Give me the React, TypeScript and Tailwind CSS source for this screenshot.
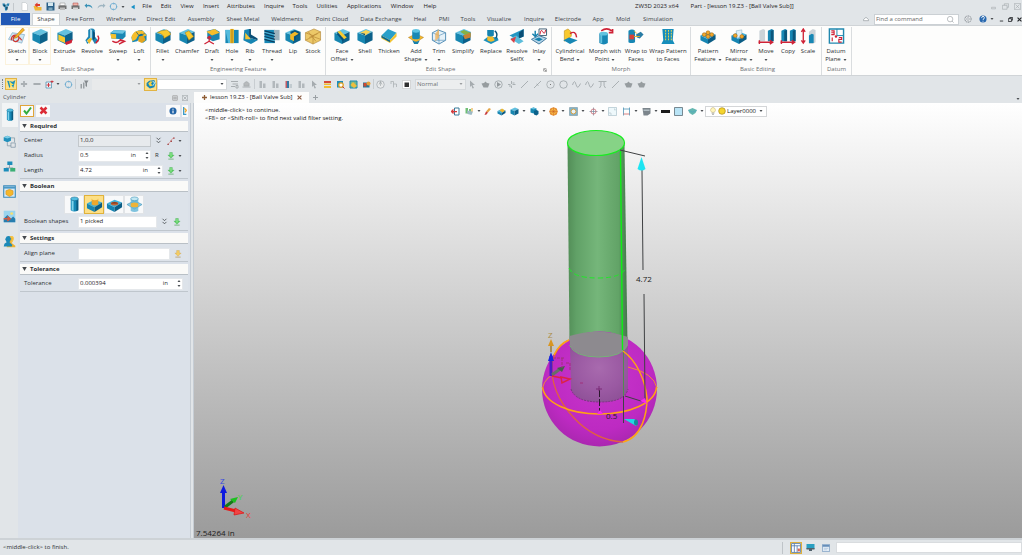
import type { ReactNode } from "react";
import clsx from "clsx";

type IconProps = { name: string; className?: string };

const box = (
  <>
    <path d="M1 5 10 1l7 3-8 4z" fill="#62c0df" />
    <path d="M1 5l8 3v9l-8-4z" fill="#1786b0" />
    <path d="M9 8l8-4v9l-8 4z" fill="#0c618a" />
  </>
);

const slab = (
  <>
    <path d="M1 8l8-4 8 3-8 5z" fill="#3fb2dc" />
    <path d="M1 8v5l8 4v-5z" fill="#1685b2" />
    <path d="M17 7v5l-8 5v-5z" fill="#0b5d85" />
  </>
);

const tube = (
  <>
    <path d="M5 3v12q4 3 8 0V3z" fill="#1788b5" />
    <path d="M6 4v11l2 1V4z" fill="#7fd3ec" />
    <path d="M11 4v12l2-1V3z" fill="#0b5a80" />
    <ellipse cx="9" cy="3" rx="4" ry="2" fill="#52bde0" stroke="#0b5a80" strokeWidth=".5" />
  </>
);

const tray = (
  <>
    <path d="M6 1h6v6h4l-7 7-7-7h4z" fill="#5ad061" stroke="#3aa84a" strokeWidth=".7" />
    <path d="M8 2h2v8H8z" fill="#a5eda2" />
    <path d="M3 16h12" stroke="#6fae78" strokeWidth="2" />
  </>
);

const art: Record<string, ReactNode> = {
  sketch: (
    <>
      <path d="M0 12 4 5l13 2-3 9z" fill="#cfe8f4" stroke="#7aa7c4" strokeWidth=".7" />
      <path d="M3 13c-1-7 9-7 8-2s-7 4-6 0 7-2 9 2" fill="none" stroke="#cf3430" strokeWidth="1.300" />
      <path d="M7 9 15 0l2 2-8 8-3 1z" fill="#f4b52a" stroke="#b67716" strokeWidth=".6" />
    </>
  ),
  block: box,
  extrude: (
    <>
      {box}
      <path d="M2 7l7 3v6l-7-3z" fill="#f8c92e" />
      <path d="M9 15l8-3-1 4-6 2z" fill="#cf2236" />
    </>
  ),
  revolve: (
    <>
      <path d="M5 2q4-3 7 0v7l4 5-4 3-3-5-5 5-2-4 3-4z" fill="#1e86b4" />
      <path d="M7 1l2 1v9l-4 4-2-1 4-4z" fill="#a8d8e8" />
      <path d="M10 3l2 2v6l-2 2z" fill="#0b4f78" />
      <path d="M4 13l4-3 1 2-3 5z" fill="#f4bd27" />
      <path d="M15 8q3 4-2 8" fill="none" stroke="#cf2236" strokeWidth="1.500" />
    </>
  ),
  sweep: (
    <>
      <path d="M1 5 5 2l12 1v6l-3 3-12-1z" fill="#1a88b5" />
      <path d="M1 5 5 2l12 1-3 3z" fill="#6bc5e3" />
      <path d="M1 6l6 .5v5L2 11z" fill="#f6c22d" />
      <path d="M3 14q5 3 8-1l5 1M10 17l6-3-5-2" fill="none" stroke="#cf2236" strokeWidth="1.500" />
    </>
  ),
  loft: (
    <>
      <path d="M1 10Q4 2 12 2l5 5v6l-4 3-3-5-3 3-5 1z" fill="#1988b4" />
      <path d="M1 9Q4 1 13 3l4 5-3 1-2-3Q8 6 6 12l-4 2z" fill="#f6be2b" />
      <path d="M9 9l5-1 2 5-4 3-4-2z" fill="#e2a51e" />
      <path d="M6 4l3 4 6-2" fill="none" stroke="#0b4f72" strokeWidth=".7" />
    </>
  ),
  fillet: (
    <>
      {box}
      <path d="M7 3l6-1q4 2 4 5l-7 4q0-5-7-6z" fill="#f8c92e" stroke="#a77a10" strokeWidth=".5" />
    </>
  ),
  chamfer: (
    <>
      {box}
      <path d="M7 5l4-2 5 6-5 4z" fill="#f8c92e" stroke="#a77a10" strokeWidth=".5" />
    </>
  ),
  draft: (
    <>
      <path d="M4 3 12 1l5 3v8l-7 2-6-3z" fill="#1b84b0" />
      <path d="M3 4 12 1l5 4-8 3z" fill="#f6bd2b" />
      <path d="M6 10v4l-5 3M6 14l5 3M4 11l2-2 2 2" fill="none" stroke="#cf2236" strokeWidth="1.400" />
    </>
  ),
  hole: (
    <>
      <path d="M2 2h14v14H2z" fill="#1787b4" />
      <path d="M2 2h5v14H5z" fill="#53bbdc" />
      <path d="M7 1h4v15H7z" fill="#f5bd28" />
      <path d="M9 1v15" stroke="#a67b12" />
    </>
  ),
  rib: (
    <>
      <path d="M3 2l5-1v9l9 3-7 4-8-4z" fill="#1685b2" />
      <path d="M8 1v9l9 3v-2l-7-4V1z" fill="#0a4f76" />
      <path d="M4 5l6 7H4z" fill="#f8c431" />
    </>
  ),
  thread: (
    <>
      <path d="M1 2h11v14H1z" fill="#1787b4" />
      <path d="M11 2h6v11h-6z" fill="#9db2bd" />
      <path d="M1 3l11 3M1 6l11 3M1 9l11 3M1 12l11 3" stroke="#0b3e60" strokeWidth="1.300" />
      <path d="M1 4.500l11 3M1 10.500l11 3" stroke="#6bc6e2" strokeWidth=".7" />
    </>
  ),
  lip: (
    <>
      {box}
      <path d="M6 4l5-2 5 2v3l-4 2v4l-5-2V7z" fill="#0a5379" />
      <path d="M6 7l5-3 4 2-5 3v5l-4-2z" fill="#f2b827" />
    </>
  ),
  stock: (
    <>
      <path d="M1 5 10 1l7 3v9l-8 4-8-4z" fill="#ecc868" stroke="#b48b3e" strokeWidth=".7" />
      <path d="M1 5l8 3 8-4M9 8v9M5 10l9-4M4 4l8 10M1 13l8-4 8 3" fill="none" stroke="#b78633" strokeWidth=".7" />
    </>
  ),
  face: (
    <>
      {box}
      <path d="M4 4l3-1 7 7-3 2z" fill="#f8c92e" />
      <path d="M4 4v3l6 7 1-2z" fill="#0a4f76" />
    </>
  ),
  shell: (
    <>
      {box}
      <path d="M4 5l6-3 5 2-6 4z" fill="#f8d458" />
      <path d="M4 5l5 1v2z" fill="#0a4f76" />
    </>
  ),
  thicken: (
    <>
      <path d="M1 8 8 1l9 4-7 8z" fill="#2aa0ca" />
      <path d="M1 8l9 5 7-8v4l-7 7-9-5z" fill="#f2c332" />
      <path d="M1 8l9 5v2L1 10z" fill="#0b6691" />
    </>
  ),
  add: (
    <>
      <path d="M1 10l8-4 8 4-8 5z" fill="#f5b82a" stroke="#a8761a" strokeWidth=".5" />
      <path d="M5 3v8q4 2 8 0V3z" fill="#1788b5" />
      <ellipse cx="9" cy="3" rx="4" ry="2" fill="#5cc3e2" />
      <path d="M5 13q4 3 8 0l-2 4H7z" fill="#1580aa" />
    </>
  ),
  trim: (
    <>
      <path d="M2 5l6-3 8 3v8l-7 4-7-4z" fill="#e5f1f8" stroke="#3d7fae" strokeWidth=".9" />
      <path d="M2 5l7 3 7-3M9 8v9M8 2v11l-6 0M8 13l8 0" fill="none" stroke="#5b94bb" strokeWidth=".7" />
      <path d="M9 1v9l-4 4V6z" fill="#f0b35c" opacity=".8" />
    </>
  ),
  simplify: (
    <>
      {box}
      <path d="M6 4l4-2 7 3v4l-5-1z" fill="#86b046" />
      <path d="M9 8l8-3v5l-6 2z" fill="#c98336" />
    </>
  ),
  replace: (
    <>
      <path d="M5 2h7v6q-3 3-7 0z" fill="#1683b0" />
      <path d="M1 13l5-4 10 1 1 3-8 4z" fill="#1b90bd" />
      <path d="M5 9h6l2 4q-4 3-8 0z" fill="#f4bc2c" />
      <path d="M13 3q4 3 1 8" fill="none" stroke="#0b5379" strokeWidth="1.500" />
    </>
  ),
  resolve: (
    <>
      <path d="M1 8 16 1v8L9 12z" fill="#2396c2" />
      <path d="M16 1v8l-5 2V5z" fill="#0a4f76" />
      <path d="M2 11l6-3 8 6-5 3z" fill="#5cbddb" />
      <path d="M2 12l6-3-2 7z" fill="#d84349" />
    </>
  ),
  inlay: (
    <>
      <path d="M9 1h8v7H9z" fill="#fff" stroke="#3c5c72" />
      <path d="M10 7q1-7 3-3t3-2" fill="none" stroke="#cf2236" />
      <path d="M1 12l8-4 8 3-8 6z" fill="#b7d6ea" stroke="#40779b" />
      <path d="M4 12l5-2 4 2-4 2z" fill="#1681ad" />
      <path d="M5 3v5M2 6l3 3 3-3" fill="none" stroke="#1681ad" strokeWidth="1.500" />
    </>
  ),
  bend: (
    <>
      <path d="M3 3l4-2 3 3q2 6-3 7l-4 3z" fill="#f8c92e" stroke="#b98714" strokeWidth=".6" />
      <path d="M2 13l6-3 9 3-8 4z" fill="#1787b4" />
      <path d="M9 6q6-4 7 4" fill="none" stroke="#cf2236" strokeWidth="1.500" />
    </>
  ),
  morph: (
    <>
      <path d="M3 6q5-3 9 0v10q-4 3-9 0z" fill="#1787b4" />
      <path d="M4 7h2v9H4z" fill="#62c3df" />
      <ellipse cx="7.500" cy="6" rx="4.500" ry="2" fill="#62c3df" />
      <path d="M5 3q6-4 11 0M13 5h4V1" fill="none" stroke="#cf2236" strokeWidth="1.800" />
    </>
  ),
  wrap: (
    <>
      <path d="M1 3q4-3 7 0v12q-4 2-7 0z" fill="#1787b4" />
      <path d="M2 7h5v5H2z" fill="#d64038" />
      <path d="M9 7l5-3 3 3-4 4-3-1z" fill="#287ca5" />
      <path d="M7 9h6M7 3l3 3" stroke="#e4b02b" />
    </>
  ),
  wrapPattern: (
    <>
      <path d="M3 1h12l-1 12 2 4H2l2-4z" fill="#178ebb" />
      {[3, 6, 9, 12].map((y) => (
        <path key={y} d={`M6 ${y}h1M9 ${y}h1M12 ${y}h1`} stroke="#f8d947" strokeWidth="2" />
      ))}
    </>
  ),
  pattern: (
    <>
      {slab}
      {["5,7", "9,5", "13,7", "9,9"].map((p) => (
        <circle key={p} cx={p.split(",")[0]} cy={p.split(",")[1]} r="2" fill="#f5a829" stroke="#9d6313" strokeWidth=".6" />
      ))}
    </>
  ),
  mirror: (
    <>
      {slab}
      <path d="M6 3l6-1v7l-5 2z" fill="#dff0f7" stroke="#7aa2ba" strokeWidth=".5" />
      <circle cx="5" cy="8" r="2" fill="#f5a829" stroke="#9d6313" strokeWidth=".6" />
      <circle cx="12" cy="9" r="2" fill="#f5a829" stroke="#9d6313" strokeWidth=".6" />
    </>
  ),
  move: (
    <>
      <path d="M2 3l4-2 2 1v12H2z" fill="#cbd3d8" />
      <path d="M11 3l4-2 2 1v12h-6z" fill="#1787b4" />
      <path d="M14 3l3-1v12h-3z" fill="#0b577d" />
      <path d="M1 15h15M13 13l3 2-3 2M2 13v4" fill="none" stroke="#cf2236" strokeWidth="1.500" />
    </>
  ),
  copy: (
    <>
      <path d="M2 3l4-2 2 1v12H2zM11 3l4-2 2 1v12h-6z" fill="#1787b4" />
      <path d="M5 3l3-1v12H5zM14 3l3-1v12h-3z" fill="#0b577d" />
      <path d="M1 15h15M13 13l3 2-3 2M2 13v4" fill="none" stroke="#cf2236" strokeWidth="1.500" />
    </>
  ),
  scale: (
    <>
      <path d="M10 4l4-3 3 1v13l-3 2h-4z" fill="#cbd3d8" />
      <path d="M10 8l3-2 2 1v9h-5z" fill="#1787b4" />
      <path d="M4 1v15M2 4l2-3 2 3M2 13l2 3 2-3" fill="none" stroke="#cf2236" strokeWidth="1.400" />
    </>
  ),
  datum: (
    <>
      <path d="M2 1h15v15H2z" fill="#fff" stroke="#2188ae" strokeWidth="1.500" />
      <path d="M10 1v7h7" fill="none" stroke="#2188ae" />
      <path d="M4 3h3v4H4M4 5h3M5 10v4M12 10h3v2h-3v3h3" fill="none" stroke="#cf2236" strokeWidth="1.200" />
      <circle cx="9" cy="9" r="1.300" fill="#cf2236" />
    </>
  ),
  cylinder: tube,
  boolAdd: (
    <>
      {slab}
      <path d="M6 3v6q3 2 7 0V3z" fill="#eda72b" />
      <ellipse cx="9.500" cy="3" rx="3.500" ry="1.500" fill="#fbe083" />
    </>
  ),
  boolCut: (
    <>
      {slab}
      <ellipse cx="9" cy="8" rx="4" ry="2" fill="#c96332" />
      <path d="M5 8q4-3 8 0" fill="#713320" />
    </>
  ),
  boolCross: (
    <>
      <path d="M1 9l8-4 8 4-8 5z" fill="#8acbe6" stroke="#3990b7" strokeWidth=".6" />
      <path d="M5 3v13q4 2 8 0V3z" fill="#61b5d7" opacity=".8" />
      <ellipse cx="9" cy="3" rx="4" ry="2" fill="#c1e7f2" stroke="#3990b7" strokeWidth=".6" />
      <path d="M5 8v3q4 2 8 0V8q-4-2-8 0z" fill="#eeb338" />
    </>
  ),
  logo: (
    <>
      <path d="M1 1h5l3 4 3-4h5l-2 6-3 1-1 9H7L6 9 2 7z" fill="#237eab" />
      <path d="M4 4h4v4H4zM10 9h3l-1 7-2-2z" fill="#123f57" />
      <path d="M6 3l5 4M13 4l-5 5" stroke="#d9f3fb" />
    </>
  ),
  page: <path d="M4 1h7l4 4v12H4z" fill="#fff" stroke="#b5babe" />,
  open: (
    <>
      <path d="M1 8h6l2 2h8v7H4z" fill="#f0b637" />
      <path d="M3 6 9 1v3h5v4H9v3z" fill="#dc3b2c" />
    </>
  ),
  save: (
    <>
      <path d="M1 1h16v16H1z" fill="#2b6088" />
      <path d="M4 1h10v7H4z" fill="#d5e8ef" />
      <path d="M5 11h8v6H5z" fill="#7da7bd" />
    </>
  ),
  print: (
    <>
      <path d="M4 2h10v5H4z" fill="#f9f9f9" stroke="#888" />
      <path d="M1 7h16v7H1z" fill="#707070" />
      <path d="M4 11h10v5H4z" fill="#bdbdbd" />
    </>
  ),
  printRed: (
    <>
      <path d="M4 2h10v5H4z" fill="#f1b3a6" stroke="#a44" />
      <path d="M1 7h16v7H1z" fill="#707070" />
      <path d="M4 11h10v5H4z" fill="#d7d7d7" />
    </>
  ),
  undo: <path d="M1 7l5-4v3q9-2 11 7-5-6-11-4v3z" fill="#3991b6" />,
  redo: <path d="M17 7l-5-4v3Q3 4 1 13q5-6 11-4v3z" fill="#9fb5c1" />,
  ring: (
    <>
      <circle cx="9" cy="9" r="6.500" fill="none" stroke="#6dacd0" strokeWidth="1.600" />
      <path d="M9 1l3 3-4 1M9 17l-3-3 4-1M1 8l3-2v5M17 10l-3 2V7" fill="#6dacd0" />
    </>
  ),
  left: <path d="M14 2v14L3 9z" fill="#148fc5" />,
  pick: (
    <>
      <path d="M2 3l4 13 4-5 3 5 4-14-5 3z" fill="#1c91bb" />
      <path d="M5 3l9 8-4 0-2 5-1-5z" fill="#f6e35a" />
    </>
  ),
  plus: <path d="M9 2v14M2 9h14" stroke="#a9afb3" strokeWidth="4" />,
  minus: <path d="M1 9h16" stroke="#a0a6aa" strokeWidth="4" />,
  addBox: (
    <>
      <path d="M2 4h11v12H2z" fill="#edf5fa" stroke="#4f8fad" strokeWidth="1.500" />
      <path d="M7 6v8M3 10h8M14 1v5M11 3h6" stroke="#cc3842" strokeWidth="2" />
    </>
  ),
  filter: (
    <>
      <path d="M1 8h3v9H1zM6 5h3v12H6z" fill="#9aa0a4" />
      <path d="M8 1h9l-3 5v8l-3-2V6z" fill="#83898d" />
    </>
  ),
  layers: (
    <>
      <path d="M1 7l5-4 9-1 2 6-2 7-8 2-6-5z" fill="#1787b4" />
      <path d="M4 8l4-4 4 1-3 3 3 4-5 1z" fill="#f5d03f" />
      <path d="M12 4l4 3-4 5" fill="none" stroke="#a3dbec" strokeWidth="2" />
    </>
  ),
  align: <path d="M2 3h14M5 8h11M2 13h8M12 11h4v5h-4z" fill="none" stroke="#a9aeb1" strokeWidth="2" />,
  bellGray: <path d="M4 12V7q5-7 10 0v5zM1 14h16" fill="#b7babc" stroke="#a9aeb1" strokeWidth="2" />,
  barGray: <path d="M3 2h5v14H3zM10 7h5v9h-5z" fill="#b2b8bc" />,
  barRed: (
    <>
      <path d="M3 2h6v14H3z" fill="#c25b65" />
      <path d="M6 2h4v14H6z" fill="#317ba5" />
      <path d="M11 8h5v8h-5z" fill="#c2cbd0" />
    </>
  ),
  arrowGray: <path d="M4 1l10 9H9l3 6-3 1-2-6-3 3z" fill="#a5abaf" />,
  tableYellow: (
    <>
      <path d="M2 2h14v4H2z" fill="#d4493a" />
      <path d="M2 7h14v3H2zM2 12h14v4H2z" fill="#f2bd31" />
    </>
  ),
  find: (
    <>
      <path d="M2 2h12v13H2z" fill="#1c8db9" />
      <circle cx="10" cy="10" r="4.500" fill="#fff" stroke="#e0a325" strokeWidth="2.500" />
      <path d="M13 13l4 4" stroke="#ca3438" strokeWidth="2" />
    </>
  ),
  mapTile: (
    <>
      <path d="M2 2h14v14H2z" fill="#75b98f" stroke="#1b88b1" strokeWidth="2" />
      <path d="M3 10l5-6 8 8-6 4z" fill="#f0be3e" />
    </>
  ),
  redTile: (
    <>
      <path d="M2 5h13v10H2z" fill="#20769c" />
      <path d="M3 6h6v7H3z" fill="#cf4a32" />
      <circle cx="13" cy="7" r="4" fill="#e7a13c" />
    </>
  ),
  clock: (
    <>
      <circle cx="9" cy="9" r="7.500" fill="#e9ebec" stroke="#9ba1a5" strokeWidth="1.300" />
      <path d="M9 3v9M6 9l3-6 3 6" fill="none" stroke="#8d9498" />
    </>
  ),
  corner: <path d="M3 3h6v12M9 8h6v6M2 6h4" fill="none" stroke="#a8aeb2" strokeWidth="1.500" />,
  blackBox: (
    <>
      <path d="M1 1h16v16H1z" fill="#fff" stroke="#bbb" />
      <path d="M5 5h9v9H5z" fill="#303030" />
    </>
  ),
  play: (
    <>
      <circle cx="9" cy="9" r="7.500" fill="none" stroke="#979da1" strokeWidth="1.500" />
      <path d="M6 4l8 5-8 5z" fill="#93999d" />
    </>
  ),
  target: (
    <>
      <circle cx="9" cy="9" r="7.500" fill="none" stroke="#979da1" strokeWidth="1.300" />
      <path d="M8 8h2v2H8z" fill="#777" />
    </>
  ),
  circle: <circle cx="9" cy="9" r="7.500" fill="none" stroke="#979da1" strokeWidth="1.500" />,
  line: <path d="M2 16 16 2" stroke="#979da1" strokeWidth="1.500" />,
  linePoint: <path d="M2 16 16 2M7 8l4 3" stroke="#979da1" strokeWidth="1.500" />,
  cross: <path d="M9 2v6M9 11v5M2 9h5M11 9h6M4 12h4M11 6h4" stroke="#979da1" strokeWidth="1.500" />,
  wave: <path d="M1 10Q5-3 8 9t9-2" fill="none" stroke="#979da1" strokeWidth="1.500" />,
  arch: <path d="M3 16q4-3 3-12M15 16q-4-3-3-12M1 3h16" fill="none" stroke="#979da1" strokeWidth="1.500" />,
  pot: <path d="M1 7l5-1 3-3 3 3 5 1-3 8H5z" fill="#969c9f" />,
  tree: (
    <>
      <path d="M1 3l5-2 5 2v5l-5 2-5-2z" fill="#2190bb" />
      <path d="M1 3l5-2 5 2-5 2z" fill="#7dcde6" />
      <path d="M6 10v5h5M11 4h5v6M11 11h6v6h-6z" fill="none" stroke="#7d94a3" />
    </>
  ),
  nodes: (
    <>
      <path d="M9 6v5M4 11h10" stroke="#738997" />
      <path d="M6 2h7v5H6zM1 11h7v5H1z" fill="#1c8dba" />
      <path d="M10 11h7v5h-7z" fill="#3baf75" />
    </>
  ),
  sheet: (
    <>
      <path d="M1 1h16v16H1z" fill="#d7ebf6" stroke="#3a89b9" strokeWidth="1.500" />
      <path d="M1 2h16v3H1z" fill="#4a98c6" />
      <path d="M4 8l5-2 5 2v5l-5 3-5-3z" fill="#f5b72a" stroke="#bf7d19" strokeWidth=".6" />
    </>
  ),
  image: (
    <>
      <path d="M1 1h16v16H1z" fill="#9bd4ee" />
      <path d="M1 12l5-5 5 5 3-3 3 3v5H1z" fill="#277dae" />
      <circle cx="12" cy="5" r="2" fill="#f3dd75" />
      <path d="M1 12h8M6 9l4 3-4 3" fill="none" stroke="#d45c43" strokeWidth="2" />
    </>
  ),
  people: (
    <>
      <path d="M9 2q6-2 5 4l-2 5 5 4v2H5z" fill="#eeb22f" />
      <path d="M5 2q6-2 6 4l-2 4 4 4-1 2H1l1-4 3-2-2-4z" fill="#1b89b8" />
      <path d="M10 3q5-2 4 3l-2 4" fill="none" stroke="#f6c54a" strokeWidth="2" />
    </>
  ),
  check: <path d="M2 9l5 6L16 3" fill="none" stroke="#31ad3e" strokeWidth="4" />,
  cancel: <path d="M3 3l12 12M15 3L3 15" stroke="#dc2c36" strokeWidth="5" />,
  info: (
    <>
      <circle cx="9" cy="9" r="8" fill="#2465a7" />
      <path d="M9 8v6M9 4v2" stroke="#fff" strokeWidth="2.500" />
    </>
  ),
  redLine: (
    <>
      <path d="M2 16Q8 12 9 8t7-6" fill="none" stroke="#e08686" strokeWidth="1.500" />
      <path d="M1 15h3v3H1zM8 8h3v3H8zM14 1h3v3h-3z" fill="#9c3a3a" />
    </>
  ),
  tray,
  trayYellow: (
    <>
      <path d="M6 1h6v6h4l-7 7-7-7h4z" fill="#f4cd64" stroke="#c49738" strokeWidth=".7" />
      <path d="M3 16h12" stroke="#b9a47a" strokeWidth="2" />
    </>
  ),
  exit: (
    <>
      <path d="M7 2h9v14H7z" fill="#fff" stroke="#397a9a" strokeWidth="2" />
      <path d="M12 9H1M5 5L1 9l4 4" fill="none" stroke="#d33b3d" strokeWidth="2.500" />
    </>
  ),
  green: (
    <>
      <path d="M1 2h5v11H1zM8 4h4v10H8z" fill="#70bf76" />
      <path d="M4 7l12 2-3 7-8-2z" fill="#9db9c5" />
      <path d="M14 2v7" stroke="#e8a22b" strokeWidth="2" />
    </>
  ),
  brush: (
    <>
      <path d="M12 2l4 2-6 7-4-2z" fill="#e3a548" />
      <path d="M6 9l4 2-3 4-4 1z" fill="#c83d40" />
    </>
  ),
  goldBox: (
    <>
      {slab}
      <path d="M5 7l5-4 6 4-5 4z" fill="#f1b52f" />
    </>
  ),
  blocks: (
    <>
      <path d="M1 3l6-2 6 2v8l-6 2-6-2z" fill="#1786b0" />
      <path d="M1 3l6-2 6 2-6 2z" fill="#62c0df" />
      <path d="M8 8l5-2 4 2v6l-4 3-5-2z" fill="#0c618a" />
    </>
  ),
  wheel: (
    <>
      <circle cx="9" cy="9" r="7.500" fill="#f7b846" stroke="#df7a22" strokeWidth="1.500" />
      <path d="M9 1v16M1 9h16M3 4l12 10M15 4L3 14" stroke="#c96322" />
    </>
  ),
  zoomAll: (
    <>
      <path d="M1 1h16v16H1z" fill="#7eb4cf" stroke="#718a94" />
      <circle cx="9" cy="9" r="5" fill="#e7f1f5" stroke="#d69c3a" strokeWidth="2" />
    </>
  ),
  pan: (
    <>
      <path d="M9 1v16M1 9h16" stroke="#7c8fa0" strokeWidth="1.500" />
      <circle cx="9" cy="9" r="5" fill="none" stroke="#c8606a" strokeWidth="1.500" />
    </>
  ),
  frame: <path d="M1 1h16v16H1zM4 10v4h4M12 4h2v3" fill="#eef8fb" stroke="#a1bac5" strokeWidth="1.200" />,
  section: (
    <>
      <path d="M3 1v16M15 1v16M3 4h12" fill="none" stroke="#438eb1" strokeWidth="1.500" />
      <path d="M3 14h12" stroke="#d05858" strokeWidth="1.500" />
    </>
  ),
  shade: (
    <>
      <path d="M1 2h16v11l-6 4H3z" fill="#7c858c" />
      <path d="M3 5h12v3H3z" fill="#b3bec4" />
    </>
  ),
  thick: <path d="M0 6h18v6H0z" fill="#1b1b1b" />,
  swatch: <path d="M1 1h16v16H1z" fill="#b9e4f6" stroke="#55666f" strokeWidth="1.500" />,
  disk: (
    <>
      <path d="M0 6l9-4 9 4-3 6-6 4-6-4z" fill="#65b7b1" />
      <path d="M1 7l8 3 8-3" fill="none" stroke="#4aa5c4" />
    </>
  ),
  bulb: (
    <>
      <path d="M6 12Q1 7 5 3q4-4 8 0t-1 9z" fill="#fff6bd" stroke="#b7a264" />
      <path d="M6 14h6M7 17h4" stroke="#8a8a82" strokeWidth="1.500" />
    </>
  ),
  sun: <circle cx="9" cy="9" r="7.500" fill="#f4d42e" stroke="#a98818" strokeWidth="1.500" />,
  grid: (
    <>
      <path d="M1 1h16v16H1z" fill="#fff" stroke="#527bb0" strokeWidth="1.500" />
      <path d="M1 5h16M6 1v16M11 5v12" stroke="#527bb0" strokeWidth="1.500" />
      <path d="M12 10h4v5h-4z" fill="#db6451" />
    </>
  ),
  monitor: (
    <>
      <path d="M1 2h16v10H1z" fill="#2a9fc1" />
      <path d="M1 10h16v3H1zM6 13h6v3H6z" fill="#51616b" />
    </>
  ),
  windowIcon: (
    <>
      <path d="M1 1h16v16H1z" fill="#e3edf6" stroke="#5e88b5" strokeWidth="1.300" />
      <path d="M1 2h16v4H1zM4 10h10M4 13h7" fill="#5e88b5" stroke="#91afd0" />
    </>
  ),
  gear: (
    <>
      <circle cx="9" cy="9" r="7" fill="#eceef0" stroke="#999fa4" strokeWidth="2.500" strokeDasharray="3 1" />
      <circle cx="9" cy="9" r="3" fill="none" stroke="#999fa4" strokeWidth="1.500" />
    </>
  ),
  help: (
    <>
      <circle cx="9" cy="9" r="8" fill="#2868af" />
      <path d="M6 7q0-4 3-4t3 3-3 4v1M9 13v2" fill="none" stroke="#fff" strokeWidth="2" />
    </>
  ),
  min: <path d="M3 13h12v3H3z" fill="currentColor" />,
  minLight: <path d="M4 11h10v4H4z" fill="none" stroke="currentColor" strokeWidth="1.500" />,
  restore: <path d="M6 6V2h11v9h-4M1 6h12v10H1z" fill="none" stroke="currentColor" strokeWidth="1.600" />,
  restoreBold: <path d="M6 6V2h11v9h-4M1 6h12v10H1z" fill="none" stroke="currentColor" strokeWidth="3" />,
  close: <path d="M2 2l14 14M16 2L2 16" stroke="currentColor" strokeWidth="4" />,
  closeBox: <path d="M1 1h16v16H1zM4 4l10 10M14 4L4 14" fill="none" stroke="currentColor" strokeWidth="1.500" />,
  chevrons: <path d="M4 2l5 5 5-5M4 10l5 5 5-5" fill="none" stroke="#3f4448" strokeWidth="2" />,
  search: <path d="M13 13l4 4M8 1a7 7 0 100 14A7 7 0 008 1" fill="none" stroke="#8f9599" strokeWidth="1.500" />,
  up: <path d="M1 11l8-7 8 7v3H1z" fill="#fff" stroke="#8e959a" strokeWidth="2" />,
};

const Icon = ({ name, className = "size-2.5" }: IconProps) => (
  <svg viewBox="0 0 18 18" className={clsx("block shrink-0", className)} aria-hidden="true">
    {art[name]}
  </svg>
);

const Caret = ({ className = "" }: { className?: string }) => (
  <svg viewBox="0 0 8 4" className={clsx("block h-0.5 w-1 shrink-0", className)} aria-hidden="true">
    <path d="M1 0h6L4 4z" fill="#4a4f53" />
  </svg>
);

const quickIcons = [
  { name: "page", label: "New", w: "w-3.5" },
  { name: "open", label: "Open", w: "w-[13px]" },
  { name: "save", label: "Save", w: "w-3" },
  { name: "print", label: "Print", w: "w-[13px]" },
  { name: "printRed", label: "Plot", w: "w-3" },
  { name: "undo", label: "Undo", w: "w-3.5" },
  { name: "redo", label: "Redo", w: "w-3" },
  { name: "ring", label: "Regenerate", w: "w-3" },
];

const menus = [
  ["File", "w-5"],
  ["Edit", "w-[18px]"],
  ["View", "w-6"],
  ["Insert", "w-6"],
  ["Attributes", "w-9"],
  ["Inquire", "w-[30px]"],
  ["Tools", "w-[22px]"],
  ["Utilities", "w-8"],
  ["Applications", "w-[42px]"],
  ["Window", "w-[34px]"],
  ["Help", "w-[22px]"],
];

const tabs = [
  ["Free Form", "w-10"],
  ["Wireframe", "w-[42px]"],
  ["Direct Edit", "w-[38px]"],
  ["Assembly", "w-[42px]"],
  ["Sheet Metal", "w-[42px]"],
  ["Weldments", "w-[46px]"],
  ["Point Cloud", "w-11"],
  ["Data Exchange", "w-[54px]"],
  ["Heal", "w-6"],
  ["PMI", "w-6"],
  ["Tools", "w-6"],
  ["Visualize", "w-[38px]"],
  ["Inquire", "w-8"],
  ["Electrode", "w-9"],
  ["App", "w-6"],
  ["Mold", "w-[26px]"],
  ["Simulation", "w-11"],
];

type Tool = { icon: string; w: string; lines: string[]; drop?: boolean; hot?: boolean };
type Group = { title: string; w: string; tools: Tool[]; launcher?: boolean };

const groups: Group[] = [
  {
    title: "Basic Shape",
    w: "w-[151px] pl-[5px]",
    tools: [
      { icon: "sketch", w: "w-6", lines: ["Sketch"], drop: true, hot: true },
      { icon: "block", w: "w-[22px]", lines: ["Block"], drop: true, hot: true },
      { icon: "extrude", w: "w-[27px]", lines: ["Extrude"] },
      { icon: "revolve", w: "w-7", lines: ["Revolve"] },
      { icon: "sweep", w: "w-6", lines: ["Sweep"], drop: true },
      { icon: "loft", w: "w-[18px]", lines: ["Loft"], drop: true },
    ],
  },
  {
    title: "Engineering Feature",
    w: "w-[175px]",
    tools: [
      { icon: "fillet", w: "w-[23px]", lines: ["Fillet"], drop: true },
      { icon: "chamfer", w: "w-[26px]", lines: ["Chamfer"] },
      { icon: "draft", w: "w-6", lines: ["Draft"], drop: true },
      { icon: "hole", w: "w-4", lines: ["Hole"], drop: true },
      { icon: "rib", w: "w-5", lines: ["Rib"], drop: true },
      { icon: "thread", w: "w-6", lines: ["Thread"], drop: true },
      { icon: "lip", w: "w-[18px]", lines: ["Lip"] },
      { icon: "stock", w: "w-[22px]", lines: ["Stock"] },
    ],
  },
  {
    title: "Edit Shape",
    w: "w-[226px] pl-1",
    launcher: true,
    tools: [
      { icon: "face", w: "w-6", lines: ["Face", "Offset"], drop: true },
      { icon: "shell", w: "w-[22px]", lines: ["Shell"] },
      { icon: "thicken", w: "w-[26px]", lines: ["Thicken"] },
      { icon: "add", w: "w-7", lines: ["Add", "Shape"], drop: true },
      { icon: "trim", w: "w-[18px]", lines: ["Trim"], drop: true },
      { icon: "simplify", w: "w-[30px]", lines: ["Simplify"] },
      { icon: "replace", w: "w-[26px]", lines: ["Replace"] },
      { icon: "resolve", w: "w-[26px]", lines: ["Resolve", "SelfX"] },
      { icon: "inlay", w: "w-[18px]", lines: ["Inlay"], drop: true },
    ],
  },
  {
    title: "Morph",
    w: "w-[139px]",
    tools: [
      { icon: "bend", w: "w-9", lines: ["Cylindrical", "Bend"], drop: true },
      { icon: "morph", w: "w-[34px]", lines: ["Morph with", "Point"], drop: true },
      { icon: "wrap", w: "w-7", lines: ["Wrap to", "Faces"] },
      { icon: "wrapPattern", w: "w-9", lines: ["Wrap Pattern", "to Faces"] },
    ],
  },
  {
    title: "Basic Editing",
    w: "w-[131px] pl-[3px]",
    tools: [
      { icon: "pattern", w: "w-7", lines: ["Pattern", "Feature"], drop: true },
      { icon: "mirror", w: "w-[34px]", lines: ["Mirror", "Feature"], drop: true },
      { icon: "move", w: "w-5", lines: ["Move"], drop: true },
      { icon: "copy", w: "w-6", lines: ["Copy"] },
      { icon: "scale", w: "w-4", lines: ["Scale"] },
    ],
  },
  {
    title: "Datum",
    w: "w-[30px]",
    tools: [{ icon: "datum", w: "w-7", lines: ["Datum", "Plane"], drop: true }],
  },
];

const selectTools = [
  "barGray", "barGray", "barRed", "barGray", "arrowGray", "tableYellow", "find", "mapTile", "redTile",
];

const pointTools = [
  "arrowGray", "pot", "play", "cross", "line", "linePoint", "target", "circle", "wave", "wave", "arch", "line", "pot", "pot",
];

const viewTools = [
  { name: "exit", w: "w-3.5" },
  { name: "green", w: "w-[18px]", drop: true },
  { name: "brush", w: "w-3.5" },
  { name: "goldBox", w: "w-[13px]" },
  { name: "block", w: "w-5", drop: true },
  { name: "blocks", w: "w-[19px]", drop: true },
  { name: "wheel", w: "w-5", drop: true },
  { name: "zoomAll", w: "w-5", drop: true },
  { name: "pan", w: "w-[19px]", drop: true },
  { name: "frame", w: "w-3.5" },
  { name: "section", w: "w-5", drop: true },
  { name: "shade", w: "w-[19px]", drop: true },
  { name: "thick", w: "w-[13px]" },
  { name: "swatch", w: "w-3.5" },
  { name: "disk", w: "w-[18px]", drop: true },
];

const TitleBar = () => (
  <header className="flex h-[13px] items-center text-[#1d2023]">
    <Icon name="logo" className="ml-0.5 size-2" />
    <span className="mr-[3px] ml-[3px] h-2 w-px bg-[#c3c8cc]" />
    {quickIcons.map((q) => (
      <button key={q.name} aria-label={q.label} className={clsx("flex justify-center", q.w)}>
        <Icon name={q.name} className="size-[9px]" />
      </button>
    ))}
    <Caret className="mx-0.5" />
    <button aria-label="Collapse menu" className="mr-px ml-[3px]">
      <Icon name="left" className="size-1.5" />
    </button>
    <nav className="flex">
      {menus.map(([label, w]) => (
        <button key={label} className={clsx("flex justify-center whitespace-nowrap", w)}>
          {label}
        </button>
      ))}
    </nav>
    <span className="ml-[194px] whitespace-nowrap">ZW3D 2023 x64</span>
    <span className="ml-3 whitespace-nowrap">Part - [lesson 19.Z3 - [Ball Valve Sub]]</span>
    <div className="mr-px ml-auto flex gap-[5px] text-[#a3a9ad]">
      <button aria-label="Minimize"><Icon name="minLight" className="size-[7px]" /></button>
      <button aria-label="Restore"><Icon name="restore" className="size-[7px]" /></button>
      <button aria-label="Close"><Icon name="closeBox" className="size-[7px]" /></button>
    </div>
  </header>
);

const TabBar = () => (
  <div className="flex h-3 items-stretch text-[#404448]">
    <button className="mr-0.5 ml-px w-[29px] bg-[#2158b5] text-white">File</button>
    <button className="w-7 border border-b-0 border-[#cfd4d7] bg-[#fdfdfc]">Shape</button>
    {tabs.map(([label, w]) => (
      <button key={label} className={clsx("flex items-center justify-center whitespace-nowrap", w)}>
        {label}
      </button>
    ))}
    <div className="ml-auto flex items-center">
      <Icon name="up" className="mr-[5px] size-1.5" />
      <label className="flex h-[11px] w-[85px] items-center border border-[#cbd0d4] bg-white pr-1">
        <input aria-label="Find a command" placeholder="Find a command" className="w-full min-w-0 pl-px placeholder:text-[#666]" />
        <Icon name="search" className="size-[7px]" />
      </label>
      <button aria-label="Options" className="ml-[5px]"><Icon name="gear" className="size-2" /></button>
      <button aria-label="Help" className="ml-[7px] flex items-center gap-[3px]">
        <Icon name="help" className="size-2" />
        <Caret />
      </button>
      <div className="ml-[5px] flex items-center gap-1 text-[#202326]">
        <Icon name="min" className="size-[5px]" />
        <Icon name="restoreBold" className="size-[5px]" />
        <Icon name="close" className="size-[5px]" />
      </div>
    </div>
  </div>
);

const ToolButton = ({ icon, w, lines, drop, hot }: Tool) => (
  <button
    className={clsx(
      "flex h-[38px] shrink-0 flex-col items-center border text-center leading-[8px] whitespace-nowrap",
      hot ? "border-[#fbf2dc]" : "border-transparent",
      w,
    )}
  >
    <Icon name={icon} className="mb-0.5 h-[17px] w-[18px]" />
    <span>{lines[0]}</span>
    <span className="flex h-2 items-center gap-0.5">
      {lines[1]}
      {drop && <Caret className="mt-0.5" />}
    </span>
  </button>
);

const Ribbon = () => (
  <div className="flex h-[51px] border-y border-[#d0d4d7] bg-[#fdfdfc] text-[#2c3033]">
    {groups.map((g) => (
      <section key={g.title} className={clsx("flex shrink-0 flex-col pt-px", g.w)}>
        <div className="relative flex flex-1 flex-col border-r border-[#dadddf]">
          <div className="flex">
            {g.tools.map((t) => (
              <ToolButton key={t.lines.join(" ")} {...t} />
            ))}
          </div>
          <h2 className="text-center leading-[9px] text-[#6a6e72]">{g.title}</h2>
          {g.launcher && (
            <button aria-label="Edit Shape options" className="absolute right-1 bottom-[3px]">
              <svg viewBox="0 0 6 6" className="size-1">
                <path d="M1 5V1h4M2 2l3 3M5 2v3H2" fill="none" stroke="#777" />
              </svg>
            </button>
          )}
        </div>
      </section>
    ))}
  </div>
);

const ToolStrip = () => (
  <div className="flex h-4 items-center">
    <span className="mr-0.5 ml-0.5 h-2.5 border-l border-dotted border-[#7d8286]" />
    <button aria-label="Pick" className="grid size-3 place-items-center border border-[#e2b443] bg-[#fde08a]">
      <Icon name="pick" className="size-2.5" />
    </button>
    <button aria-label="Add" className="ml-[3px]"><Icon name="plus" className="size-2" /></button>
    <button aria-label="Remove" className="ml-[5px]"><Icon name="minus" className="size-2" /></button>
    <button aria-label="Add chain" className="ml-1 flex items-center gap-0.5">
      <Icon name="addBox" className="size-[9px]" />
      <Caret />
    </button>
    <button aria-label="Polygon" className="ml-1"><Icon name="ring" className="size-[9px]" /></button>
    <span className="ml-0.5 h-2.5 w-px bg-[#c8cdd1]" />
    <button aria-label="Filter" className="ml-1"><Icon name="filter" className="size-[9px]" /></button>
    <label className="relative ml-[3px] flex items-center">
      <select aria-label="Filter type" disabled className="h-[11px] w-[51px] appearance-none bg-[#e8eaeb]">
        <option></option>
      </select>
      <Caret className="absolute right-0.5 opacity-50" />
    </label>
    <button aria-label="Pick from" className="ml-px grid size-[13px] place-items-center border border-[#e2b443] bg-[#fde08a]">
      <Icon name="layers" className="size-2.5" />
    </button>
    <label className="relative flex items-center">
      <select aria-label="Pick source" className="h-[11px] w-[70px] appearance-none border border-[#d5d9dc] bg-white">
        <option></option>
      </select>
      <Caret className="absolute right-[3px]" />
    </label>
    <Icon name="align" className="ml-[3px] size-[9px]" />
    <Icon name="bellGray" className="ml-[3px] size-[9px]" />
    <span className="mx-[3px] h-2.5 w-px bg-[#c8cdd1]" />
    <div className="flex gap-1">
      {selectTools.map((t, i) => (
        <Icon key={i} name={t} className="size-[9px]" />
      ))}
    </div>
    <span className="mx-0.5 h-2.5 w-px bg-[#c8cdd1]" />
    <div className="flex gap-1">
      <Icon name="clock" className="size-[9px]" />
      <Icon name="corner" className="size-[9px]" />
      <Icon name="blackBox" className="size-[9px]" />
    </div>
    <label className="relative ml-1 flex items-center">
      <select aria-label="Snap mode" className="h-[11px] w-[51px] appearance-none border border-[#d5d9dc] bg-[#eceeef] pl-px text-[#6d7175]">
        <option>Normal</option>
      </select>
      <Caret className="absolute right-[3px] opacity-50" />
    </label>
    <div className="ml-0.5 flex gap-1">
      {pointTools.map((t, i) => (
        <Icon key={i} name={t} className="size-[9px]" />
      ))}
    </div>
  </div>
);

const Section = ({ title, children }: { title: string; children: ReactNode }) => (
  <section className="mb-0.5 border-b border-[#bfc6cd] bg-[#dde3ea]">
    <h3 className="flex h-[11px] items-center gap-[3px] border-b border-[#b9c0c6] bg-[#fafaf8] pl-0.5 font-bold text-[#2c3033]">
      <svg viewBox="0 0 8 7" className="h-1 w-[5px]" aria-hidden="true">
        <path d="M0 0h8L4 7z" fill="#44484c" />
      </svg>
      {title}
    </h3>
    {children}
  </section>
);

type FieldProps = {
  id: string;
  label: string;
  value: string;
  w: string;
  unit?: boolean;
  muted?: boolean;
  children?: ReactNode;
};

const Field = ({ id, label, value, w, unit, muted, children }: FieldProps) => (
  <div className="flex h-[15px] items-center pl-1">
    <label htmlFor={id} className="w-[54px] shrink-0 whitespace-nowrap">{label}</label>
    <div
      className={clsx(
        "mr-1 flex h-3 shrink-0 items-center border",
        muted ? "border-[#c3c8cc] bg-[#e7eaed]" : "border-[#e5e8eb] bg-white",
        w,
      )}
    >
      <input id={id} defaultValue={value} className="w-full min-w-0 pl-px text-[#1d2023]" />
      {unit && (
        <>
          <span className="mr-[9px]">in</span>
          <span className="mr-px flex flex-col gap-[3px]">
            <Caret className="rotate-180" />
            <Caret />
          </span>
        </>
      )}
    </div>
    {children}
  </div>
);

const TrayMenu = ({ icon }: { icon: string }) => (
  <button aria-label="Input options" className="flex items-center gap-[3px]">
    <Icon name={icon} className="size-2" />
    <Caret />
  </button>
);

const railIcons = ["tree", "nodes", "sheet", "image", "people"];
const boolModes = [
  ["cylinder", "Base"],
  ["boolAdd", "Add"],
  ["boolCut", "Remove"],
  ["boolCross", "Intersect"],
];

const CommandPanel = () => (
  <aside className="flex w-[193px] shrink-0 flex-col">
    <div className="flex h-[11px] items-center pl-[3px] text-[#55595d]">
      <span>Cylinder</span>
      <span className="mr-[5px] ml-auto flex gap-1 text-[#888e92]">
        <svg viewBox="0 0 8 8" className="size-1.5"><path d="M1 1h6v6H1zM1 4h6M4 2v4" fill="none" stroke="#999" /></svg>
        <Icon name="closeBox" className="size-1.5" />
      </span>
    </div>
    <div className="flex flex-1">
      <div className="flex w-[18px] flex-col items-center gap-3">
        <button aria-label="Command" className="-mb-1 ml-0.5 grid h-6 w-4 place-items-center bg-[#f2f4f5]">
          <Icon name="cylinder" className="size-3.5" />
        </button>
        {railIcons.map((r) => (
          <button key={r} aria-label={r}>
            <Icon name={r} className="size-[13px]" />
          </button>
        ))}
      </div>
      <div className="w-[173px] border-r border-[#c6cdd4] bg-[#dbe1e9] px-0.5 text-[#2c3033]">
        <div className="mb-[3px] flex h-[15px] items-center gap-0.5">
          <button aria-label="OK" className="grid h-3 w-3.5 place-items-center border border-[#e0a53a] bg-[#fafafa]">
            <Icon name="check" className="size-[9px]" />
          </button>
          <button aria-label="Cancel" className="grid h-3 w-3.5 place-items-center bg-[#fafafa]">
            <Icon name="cancel" className="size-[9px]" />
          </button>
          <button aria-label="Info" className="ml-auto grid h-3 w-3.5 place-items-center bg-[#fafafa]">
            <Icon name="info" className="size-2" />
          </button>
          <button aria-label="Data" className="grid h-3 w-1.5 place-items-center bg-[#fafafa]">
            <svg viewBox="0 0 6 12" className="h-2.5 w-1">
              <path d="M1 0v12M0 11h5" fill="none" stroke="#3c9bc8" strokeWidth="2" />
              <path d="M2 2l3 3-2 3" fill="none" stroke="#eea62c" strokeWidth="2" />
            </svg>
          </button>
        </div>
        <Section title="Required">
          <div className="pt-px">
            <Field id="center" label="Center" value="1,0,0" w="w-[73px]" muted>
              <Icon name="chevrons" className="mr-[5px] size-[7px]" />
              <TrayMenu icon="redLine" />
            </Field>
            <Field id="radius" label="Radius" value="0.5" w="w-[73px]" unit>
              <span className="mr-[5px] w-[7px]">R</span>
              <TrayMenu icon="tray" />
            </Field>
            <Field id="length" label="Length" value="4.72" w="w-[85px]" unit>
              <TrayMenu icon="tray" />
            </Field>
          </div>
        </Section>
        <Section title="Boolean">
          <div className="pt-[3px] pb-px">
            <div className="flex justify-center">
              {boolModes.map(([icon, label]) => (
                <button
                  key={icon}
                  aria-label={label}
                  className={clsx(
                    "grid h-[19px] w-5 place-items-center border",
                    icon === "boolAdd" ? "border-[#e0b23b] bg-[#fddf86]" : "border-[#e1e4e7] bg-[#f8f9fa]",
                  )}
                >
                  <Icon name={icon} className="size-[17px]" />
                </button>
              ))}
            </div>
            <Field id="shapes" label="Boolean shapes" value="1 picked" w="w-[79px]">
              <Icon name="chevrons" className="mr-[5px] size-[7px]" />
              <Icon name="tray" className="size-2" />
            </Field>
          </div>
        </Section>
        <Section title="Settings">
          <div className="pt-0.5">
            <Field id="plane" label="Align plane" value="" w="w-[92px]">
              <Icon name="trayYellow" className="size-2" />
            </Field>
          </div>
        </Section>
        <Section title="Tolerance">
          <div className="pt-px">
            <Field id="tolerance" label="Tolerance" value="0.000394" w="w-[105px]" unit />
          </div>
        </Section>
      </div>
    </div>
  </aside>
);

const Scene = () => (
  <svg viewBox="194 103 828 435" className="absolute inset-0 h-full w-full" role="img" aria-label="Ball valve model">
    <defs>
      <linearGradient id="rod">
        <stop offset="0" stopColor="#528d57" />
        <stop offset=".15" stopColor="#61a167" />
        <stop offset=".5" stopColor="#75b67a" />
        <stop offset=".85" stopColor="#62a367" />
        <stop offset="1" stopColor="#43764a" />
      </linearGradient>
      <radialGradient id="ball" cx=".5" cy=".4" r=".65">
        <stop offset="0" stopColor="#c936cc" />
        <stop offset=".7" stopColor="#bd2ac2" />
        <stop offset="1" stopColor="#a426aa" />
      </radialGradient>
      <radialGradient id="core" cx=".5" cy=".4" r=".7">
        <stop offset="0" stopColor="#a86aae" />
        <stop offset=".6" stopColor="#9a59a2" />
        <stop offset="1" stopColor="#8b4f94" />
      </radialGradient>
    </defs>

    {/* rod and ball */}
    <path d="M567.500 144 569.500 345 Q598 366 627.500 345L624.500 144z" fill="url(#rod)" />
    <circle cx="599.500" cy="389" r="57.500" fill="url(#ball)" />
    <path d="M569.500 336Q599 327 628 337v8q-6 12-29 12t-29-12z" fill="#8d8a8f" />
    <path d="M570 345q5 12 29 12t29-12v44q-4 13-28 13t-29-13z" fill="url(#core)" />
    <path d="M571 389q4 13 29 13t28-13" fill="none" stroke="#793780" strokeDasharray="2 1" />
    <path d="M569.500 345q5 12 29 12t29-12" fill="none" stroke="#74b475" />
    <path d="M569 268q4 10 29 10t28-11" fill="none" stroke="#22e62a" strokeDasharray="5 3" />
    <ellipse cx="596" cy="143" rx="28.500" ry="12.500" fill="#86d386" stroke="#18ed20" strokeWidth="1.200" />
    <path d="M620.500 151 622.500 350" stroke="#0cf014" strokeWidth="1.400" />
    <path d="M623.500 350v46" stroke="#528a50" />

    {/* sphere edges */}
    <path d="M569 340q-12 5-17 23c-2 24 10 42 22 55 15 16 33 23 49 24" fill="none" stroke="#e2603f" strokeWidth="1.300" />
    <path d="M569 340q-10 4-15 15M623 351c14 10 22 29 24 47 0 14-4 39-24 44" fill="none" stroke="#ffa313" strokeWidth="1.500" />
    <path d="M542.500 387c2 16 27 27 57 27s56-11 57-27" fill="none" stroke="#ffa313" strokeWidth="1.600" />
    <path d="M542.500 388q2-11 18-18M628 367q26 6 29 21" fill="none" stroke="#f18a38" />

    {/* dimensions */}
    <g stroke="#3f4143" strokeWidth="1">
      <path d="M620 150l25 6M642 170l1 100M644 294l1 106M625 396l19 6M623.500 396v27" />
      <path d="M599.500 390v24" stroke="#2b172d" strokeDasharray="7 2" />
    </g>
    <path d="M641.500 157l4 12q-4 3-8 0z" fill="#1de5f2" />
    <path d="M624 419l10 0q5 3 2 7z" fill="#20d8e5" />
    <ellipse cx="636" cy="422.500" rx="2" ry="3" fill="#168b98" />
    <path d="M640 401l5-3 2 6z" fill="#f627ef" />
    <path d="M597 414l3-4 3 4z" fill="#f627ef" />
    <path d="M596 389h6M599 386v5" fill="none" stroke="#7b2a76" />
    <g fontSize="8" fill="#202020">
      <text x="636" y="282">4.72</text>
      <text x="606" y="419">0.5</text>
    </g>

    {/* local axes */}
    <path d="M551 376v-20" stroke="#4a1cc4" strokeWidth="3" />
    <path d="M548 361l3-9 3 9z" fill="#1624e0" />
    <path d="M551 352v-6" stroke="#9b7a35" strokeWidth="1.500" />
    <path d="M548 346l3-7 3 7z" fill="#d99621" />
    <path d="M552 375l8-6" stroke="#666f66" strokeWidth="3" />
    <path d="M557 368l8-2-3 6z" fill="#45604b" />
    <path d="M552 376l10 2M561 377l9 2-8 4z" fill="none" stroke="#dc2345" strokeWidth="1.500" />
    <path d="M553 358h12M562 358v10M566 363h4v8M580 383h4" fill="none" stroke="#a0307a" strokeDasharray="3 1" />
    <text x="548" y="338" fontSize="8" fill="#ac8c43">Z</text>

    {/* view triad */}
    <path d="M223.500 508v-18" stroke="#0e19df" strokeWidth="3" />
    <path d="M220 493l3.500-8 3.500 8z" fill="#0e19df" />
    <path d="M225 507l8-6" stroke="#147b18" strokeWidth="3" />
    <path d="M230 499l8-2-3 6z" fill="#1bc11e" />
    <path d="M224 508l12 3" stroke="#e71919" strokeWidth="3" />
    <path d="M235 508l9 5-10 2z" fill="#f04444" stroke="#d11" strokeWidth=".7" />
    <g fontSize="8">
      <text x="220" y="484" fill="#3547e0">Z</text>
      <text x="238" y="500" fill="#34dc39">Y</text>
      <text x="246" y="518" fill="#e63832">X</text>
    </g>
  </svg>
);

const Viewport = () => (
  <main className="flex min-w-0 flex-1 flex-col">
    <div className="flex h-[11px] items-end">
      <div className="ml-px flex h-[11px] w-[115px] items-center bg-[#fdfdfc] pl-2 whitespace-nowrap text-[#1d2023]">
        <svg viewBox="0 0 5 5" className="mr-[3px] size-[5px] shrink-0" aria-hidden="true">
          <path d="M2.500 0v5M0 2.500h5" stroke="#8f5d34" strokeWidth="1.300" />
        </svg>
        lesson 19.Z3 - [Ball Valve Sub]
        <button aria-label="Close file" className="ml-1 text-[#8b5b43]">
          <Icon name="close" className="size-[5px]" />
        </button>
      </div>
      <button aria-label="New tab" className="mb-[3px] ml-1">
        <svg viewBox="0 0 5 5" className="size-[5px]">
          <path d="M2.500 0v5M0 2.500h5" stroke="#9aa0a4" />
        </svg>
      </button>
      <Caret className="mr-0.5 mb-[3px] ml-auto" />
    </div>
    <div className="relative flex flex-1 flex-col border-l border-[#c6cdd4] bg-linear-to-b from-white to-[#9b9b9b]">
      <Scene />
      <div className="relative flex items-start pt-0.5 text-[#111]">
        <p className="w-[257px] shrink-0 pt-px pl-[11px] leading-[8px]">
          &lt;middle-click&gt; to continue.
          <br />
          &lt;F8&gt; or &lt;Shift-roll&gt; to find next valid filter setting.
        </p>
        <div className="flex h-3 items-center">
          {viewTools.map((t, i) => (
            <button key={i} aria-label={t.name} className={clsx("flex shrink-0 items-center gap-[3px]", t.w)}>
              <Icon name={t.name} className="size-[9px]" />
              {t.drop && <Caret />}
            </button>
          ))}
          <label className="relative -ml-px flex h-[11px] w-[62px] items-center border border-[#d4d6d8] bg-white pl-[3px]">
            <Icon name="bulb" className="size-2" />
            <Icon name="sun" className="ml-px size-2" />
            <select aria-label="Layer" className="min-w-0 flex-1 appearance-none pl-px">
              <option>Layer0000</option>
            </select>
            <Caret className="absolute right-[3px]" />
          </label>
        </div>
      </div>
      <p className="relative mt-auto pl-0.5 text-[8px] leading-[11px] text-[#202020]">7.54264 in</p>
    </div>
  </main>
);

const StatusBar = () => (
  <footer className="flex h-[17px] items-center border-t-2 border-[#cdd2d6] pl-[3px] text-[#2c3033]">
    <span>&lt;middle-click&gt; to finish.</span>
    <div className="ml-auto flex w-[240px] items-center border-l border-[#bfc4c8] pl-[7px]">
      <button aria-label="Manager" className="mr-1 grid size-3 place-items-center border border-[#dfb13d] bg-[#fde69e]">
        <Icon name="grid" className="size-2.5" />
      </button>
      <button aria-label="Display" className="mr-[7px]"><Icon name="monitor" className="size-[9px]" /></button>
      <button aria-label="Output" className="mr-1.5"><Icon name="windowIcon" className="size-2" /></button>
      <output className="h-[11px] flex-1 border border-[#d9dcdf] bg-white" />
    </div>
  </footer>
);

const App = () => (
  <div className="flex min-h-screen flex-col overflow-hidden bg-[#e1e5e8] font-['Open_Sans','Noto_Sans',sans-serif] text-[6px] leading-[9px] text-[#2c3033]">
    <TitleBar />
    <TabBar />
    <Ribbon />
    <ToolStrip />
    <div className="flex flex-1">
      <CommandPanel />
      <Viewport />
    </div>
    <StatusBar />
  </div>
);

export default App;
